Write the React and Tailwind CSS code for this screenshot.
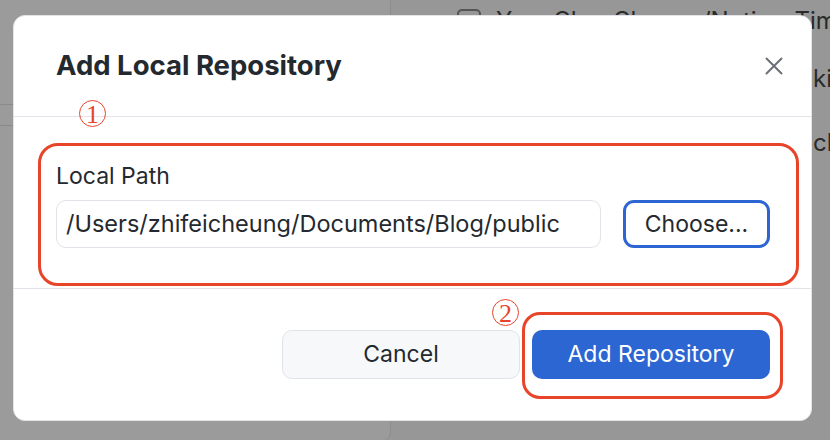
import React from 'react';

function Circled({ n }) {
  return (
    <span className="flex h-[27px] w-[27px] items-center justify-center rounded-full border-[1.3px] border-[#e8442a] pt-[2px] text-[26px] leading-none text-[#e8442a] [font-family:'Liberation_Serif',serif]">
      {n}
    </span>
  );
}

export default function App() {
  return (
    <div className="relative h-[440px] w-[830px] overflow-hidden bg-[#979797] [font-family:Inter,'Liberation_Sans',sans-serif]">
      {/* background app, dimmed */}
      <div className="flex h-full">
        <div className="flex w-[391px] shrink-0 flex-col rounded-br-lg border-r border-[#8c8c8c] bg-[#9b9b9b]">
          <div className="h-[104px]" />
          <div className="h-[22px] border-y border-[#8a8a8a]" />
        </div>
        <div className="flex min-w-0 flex-1 flex-col pl-[66px] text-[24px] text-[#2a2a2a]">
          <div className="-mt-[2px] flex h-[46px] items-center gap-[15px]">
            <span className="h-[24px] w-[24px] shrink-0 rounded-[5px] border-2 border-[#555]" />
            <span className="whitespace-nowrap">YuanChenCheung/Notion-Timeline</span>
          </div>
          <div className="flex h-[70px] items-center whitespace-nowrap pl-[356px]">kit-notes</div>
          <div className="flex h-[58px] items-center whitespace-nowrap pl-[356px]">clone</div>
        </div>
      </div>

      {/* dialog */}
      <div className="absolute left-[13px] top-[15px] flex h-[406px] w-[799px] flex-col rounded-xl border border-[#e3e3e8] bg-white text-[#24292f]">
        <div className="flex h-[100px] shrink-0 items-center justify-between pl-[42px] pr-[28px]">
          <h1 className="text-[27.5px] font-bold">Add Local Repository</h1>
          <svg width="18" height="18" viewBox="0 0 18 18" className="text-[#6b7079]">
            <path d="M1.5 1.5L16.5 16.5M16.5 1.5L1.5 16.5" stroke="currentColor" strokeWidth="2" strokeLinecap="round" />
          </svg>
        </div>
        <div className="border-t-[1.5px] border-[#e1e3e8]" />
        <div className="flex flex-col gap-[10px] pl-[42px] pr-[41px] pt-[45px] pb-[40px]">
          <label className="text-[23px] leading-[28px]">Local Path</label>
          <div className="flex items-center gap-[22px]">
            <div className="flex h-[48px] w-[545px] items-center rounded-[10px] border-[1.5px] border-[#e1e3e8] px-[9px] text-[23.5px]">
              /Users/zhifeicheung/Documents/Blog/public
            </div>
            <button className="flex h-[48px] flex-1 items-center justify-center rounded-[11px] border-[3px] border-[#2d66d2] bg-white text-[23px]">
              Choose...
            </button>
          </div>
        </div>
        <div className="border-t-[1.5px] border-[#e1e3e8]" />
        <div className="flex flex-1 items-start justify-end gap-[12px] pr-[41px] pt-[41px]">
          <button className="flex h-[49px] w-[238px] items-center justify-center rounded-[10px] border-[1.5px] border-[#e1e3e8] bg-[#f6f8fa] text-[23px]">
            Cancel
          </button>
          <button className="flex h-[49px] w-[238px] items-center justify-center rounded-[10px] bg-[#2c66d2] text-[23px] text-white">
            Add Repository
          </button>
        </div>

        {/* annotations */}
        <div className="absolute left-[24px] top-[127px] h-[143px] w-[761px] rounded-[20px] border-[3.5px] border-[#e8442a]" />
        <div className="absolute left-[508px] top-[296px] h-[87px] w-[261px] rounded-[18px] border-[3.5px] border-[#e8442a]" />
        <div className="absolute left-[65px] top-[84px]">
          <Circled n="1" />
        </div>
        <div className="absolute left-[478px] top-[283px]">
          <Circled n="2" />
        </div>
      </div>
    </div>
  );
}
